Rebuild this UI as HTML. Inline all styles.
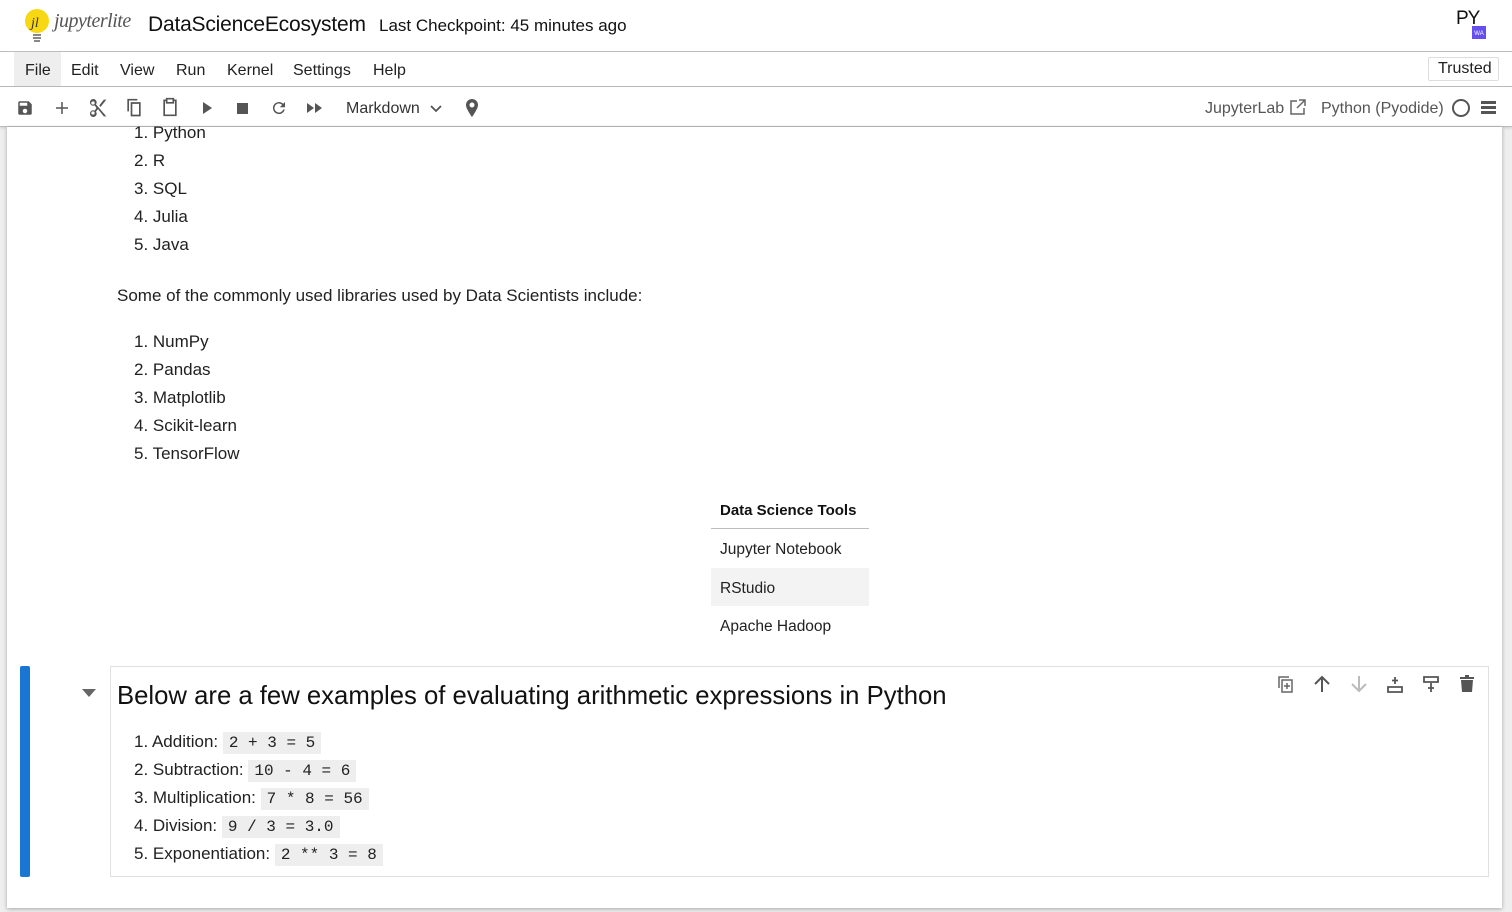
<!DOCTYPE html>
<html><head><meta charset="utf-8"><style>
*{box-sizing:border-box;margin:0;padding:0}
body{width:1512px;height:912px;overflow:hidden;background:#eee;font-family:"Liberation Sans",sans-serif;color:#212121;position:relative}
.abs{position:absolute;white-space:nowrap}
#top{position:absolute;left:0;top:0;width:1512px;height:52px;background:#fff;border-bottom:1px solid #bdbdbd}
#menu{position:absolute;left:0;top:52px;width:1512px;height:35px;background:#fff;border-bottom:1px solid #bdbdbd}
#tool{position:absolute;left:0;top:87px;width:1512px;height:40px;background:#fff;border-bottom:1px solid #bdbdbd;box-shadow:0 1px 3px rgba(0,0,0,.15)}
#panel{position:absolute;left:7px;top:127px;width:1495px;height:781px;background:#fff;box-shadow:0 1px 4px rgba(0,0,0,.3)}
.m{font-size:16px;color:#212121}
.li{font-size:17px;color:#212121}
code{font-family:"Liberation Mono",monospace;font-size:16px;background:#eee;padding:2px 6px}
</style></head><body>
<div id="top">
 <svg class="abs" style="left:24px;top:8px" width="28" height="34" viewBox="0 0 28 34"><circle cx="13" cy="13" r="12" fill="#f8d713"/><text x="7" y="19" font-size="14" font-style="italic" fill="#333" font-family="Liberation Serif">jl</text><rect x="9" y="26" width="8" height="2" fill="#888"/><rect x="9" y="29" width="8" height="2" fill="#888"/><rect x="10" y="32" width="6" height="2" fill="#888"/></svg>
 <div class="abs" style="left:54px;top:10px;font-family:'Liberation Serif',serif;font-style:italic;font-size:20px;color:#555;letter-spacing:-0.5px">jupyterlite</div>
 <div class="abs" style="left:148px;top:13px;font-size:21px;color:#111;letter-spacing:-0.2px">DataScienceEcosystem</div>
 <div class="abs" style="left:379px;top:16px;font-size:17px;color:#111">Last Checkpoint: 45 minutes ago</div>
 <div class="abs" style="left:1456px;top:8px;font-size:19px;color:#111;letter-spacing:-1px">PY</div>
 <div class="abs" style="left:1472px;top:26px;width:14px;height:13px;background:#654ff0;color:#fff;font-size:6px;text-align:center;line-height:16px">WA</div>
</div>
<div id="menu">
 <div class="abs" style="left:14px;top:0;width:47px;height:34px;background:#eee"></div>
 <div class="abs m" style="left:25px;top:10px">File</div>
 <div class="abs m" style="left:71px;top:10px">Edit</div>
 <div class="abs m" style="left:120px;top:10px">View</div>
 <div class="abs m" style="left:176px;top:10px">Run</div>
 <div class="abs m" style="left:227px;top:10px">Kernel</div>
 <div class="abs m" style="left:293px;top:10px">Settings</div>
 <div class="abs m" style="left:373px;top:10px">Help</div>
 <div class="abs m" style="left:1428px;top:5px;width:71px;height:24px;border:1px solid #ddd;border-radius:2px;padding:2px 0 0 9px">Trusted</div>
</div>
<div id="tool">
 <svg class="abs" style="left:16px;top:12px" width="18" height="18" viewBox="0 0 24 24"><path fill="#555" d="M17 3H5a2 2 0 0 0-2 2v14a2 2 0 0 0 2 2h14a2 2 0 0 0 2-2V7l-4-4zm-5 16a3 3 0 1 1 0-6 3 3 0 0 1 0 6zm3-10H5V5h10v4z"/></svg>
 <svg class="abs" style="left:53px;top:12px" width="18" height="18" viewBox="0 0 24 24"><path stroke="#555" stroke-width="2" d="M12 4v16M4 12h16"/></svg>
 <svg class="abs" style="left:88px;top:11px" width="20" height="20" viewBox="0 0 24 24"><path fill="#555" d="M9.6 7.6A4 4 0 1 0 8 8.9L10.1 12 8 15.1A4 4 0 1 0 9.6 16.4L12 13.4l7 8.6h3L9.6 7.6zM6 8a2 2 0 1 1 0-4 2 2 0 0 1 0 4zm0 12a2 2 0 1 1 0-4 2 2 0 0 1 0 4zM19 2l-5.5 7 1.5 1.8L22 2z"/></svg>
 <svg class="abs" style="left:124px;top:11px" width="20" height="20" viewBox="0 0 24 24"><path fill="none" stroke="#555" stroke-width="2" d="M16 2H5v14M9 6h10v15H9z"/></svg>
 <svg class="abs" style="left:160px;top:10px" width="20" height="20" viewBox="0 0 24 24"><path fill="none" stroke="#555" stroke-width="2" d="M8 4H5v18h14V4h-3M8 2h8v5H8z"/></svg>
 <svg class="abs" style="left:200px;top:14px" width="14" height="14" viewBox="0 0 14 14"><path fill="#555" d="M3 1l9 6-9 6z"/></svg>
 <div class="abs" style="left:237px;top:16px;width:11px;height:11px;background:#555"></div>
 <svg class="abs" style="left:270px;top:12px" width="18" height="18" viewBox="0 0 24 24"><path fill="#555" d="M17.6 6.4A8 8 0 1 0 19.7 14h-2.1A6 6 0 1 1 16.2 7.8L13 11h7V4z"/></svg>
 <svg class="abs" style="left:306px;top:14px" width="18" height="14" viewBox="0 0 18 14"><path fill="#555" d="M1 2l7 5-7 5zM9 2l7 5-7 5z"/></svg>
 <div class="abs m" style="left:346px;top:13px;color:#333">Markdown</div>
 <svg class="abs" style="left:430px;top:17px" width="12" height="10" viewBox="0 0 12 10"><path fill="none" stroke="#555" stroke-width="1.8" d="M1 2l5 5 5-5"/></svg>
 <svg class="abs" style="left:464px;top:11px" width="16" height="20" viewBox="0 0 16 20"><path fill="#555" d="M8 1a6 6 0 0 0-6 6c0 4 6 12 6 12s6-8 6-12a6 6 0 0 0-6-6zm0 8.5A2.5 2.5 0 1 1 8 4.5a2.5 2.5 0 0 1 0 5z"/></svg>
 <div class="abs m" style="left:1205px;top:13px;color:#555">JupyterLab</div>
 <svg class="abs" style="left:1289px;top:11px" width="18" height="18" viewBox="0 0 18 18"><path fill="none" stroke="#666" stroke-width="1.5" d="M8 3H2v13h13v-6M10 2h6v6M16 2L8 10"/></svg>
 <div class="abs m" style="left:1321px;top:13px;color:#555">Python (Pyodide)</div>
 <div class="abs" style="left:1452px;top:12px;width:18px;height:18px;border:2px solid #555;border-radius:50%"></div>
 <div class="abs" style="left:1481px;top:14px;width:15px;height:3px;background:#555;box-shadow:0 5px 0 #555,0 10px 0 #555"></div>
</div>
<div id="panel"></div>
<div class="abs li" style="left:134px;top:123px">1. Python</div>
<div class="abs li" style="left:134px;top:151px">2. R</div>
<div class="abs li" style="left:134px;top:179px">3. SQL</div>
<div class="abs li" style="left:134px;top:207px">4. Julia</div>
<div class="abs li" style="left:134px;top:235px">5. Java</div>
<div class="abs li" style="left:117px;top:286px">Some of the commonly used libraries used by Data Scientists include:</div>
<div class="abs li" style="left:134px;top:332px">1. NumPy</div>
<div class="abs li" style="left:134px;top:360px">2. Pandas</div>
<div class="abs li" style="left:134px;top:388px">3. Matplotlib</div>
<div class="abs li" style="left:134px;top:416px">4. Scikit-learn</div>
<div class="abs li" style="left:134px;top:444px">5. TensorFlow</div>
<div class="abs" style="left:711px;top:528px;width:158px;height:1px;background:#bdbdbd"></div>
<div class="abs" style="left:711px;top:568px;width:158px;height:38px;background:#f3f3f3"></div>
<div class="abs" style="left:720px;top:502px;font-size:15px;font-weight:bold;color:#111">Data Science Tools</div>
<div class="abs" style="left:720px;top:541px;font-size:15.5px">Jupyter Notebook</div>
<div class="abs" style="left:720px;top:580px;font-size:15.5px">RStudio</div>
<div class="abs" style="left:720px;top:618px;font-size:15.5px">Apache Hadoop</div>
<div class="abs" style="left:20px;top:666px;width:10px;height:211px;background:#1976d2;border-radius:2px"></div>
<svg class="abs" style="left:82px;top:689px" width="14" height="9" viewBox="0 0 14 9"><path fill="#666" d="M0 0h14L7 8z"/></svg>
<div class="abs" style="left:110px;top:666px;width:1379px;height:211px;border:1px solid #e0e0e0"></div>
<div class="abs" style="left:117px;top:682px;font-size:25.7px;color:#111">Below are a few examples of evaluating arithmetic expressions in Python</div>
<div class="abs li" style="left:134px;top:732px">1. Addition: <code>2 + 3 = 5</code></div>
<div class="abs li" style="left:134px;top:760px">2. Subtraction: <code>10 - 4 = 6</code></div>
<div class="abs li" style="left:134px;top:788px">3. Multiplication: <code>7 * 8 = 56</code></div>
<div class="abs li" style="left:134px;top:816px">4. Division: <code>9 / 3 = 3.0</code></div>
<div class="abs li" style="left:134px;top:844px">5. Exponentiation: <code>2 ** 3 = 8</code></div>
<svg class="abs" style="left:1277px;top:675px" width="18" height="18" viewBox="0 0 18 18"><path fill="none" stroke="#666" stroke-width="1.5" d="M12 2H2v11M5 5h10v12H5zM10 8v6M7 11h6"/></svg>
<svg class="abs" style="left:1313px;top:675px" width="18" height="18" viewBox="0 0 18 18"><path fill="none" stroke="#555" stroke-width="2" d="M9 17V2M2 9l7-7 7 7"/></svg>
<svg class="abs" style="left:1350px;top:675px" width="18" height="18" viewBox="0 0 18 18"><path fill="none" stroke="#bbb" stroke-width="2" d="M9 1v15M2 9l7 7 7-7"/></svg>
<svg class="abs" style="left:1386px;top:675px" width="18" height="18" viewBox="0 0 18 18"><path fill="none" stroke="#555" stroke-width="1.8" d="M2 12h14v5H2zM9 2v7M6 5.5h6"/></svg>
<svg class="abs" style="left:1422px;top:675px" width="18" height="18" viewBox="0 0 18 18"><path fill="none" stroke="#555" stroke-width="1.8" d="M2 2h14v5H2zM9 8v9M6 13h6"/></svg>
<svg class="abs" style="left:1459px;top:675px" width="16" height="18" viewBox="0 0 16 18"><path fill="#555" d="M2 5h12l-1 12H3zM1 2h14v2H1zM6 0h4v2H6z"/></svg>
</body></html>
